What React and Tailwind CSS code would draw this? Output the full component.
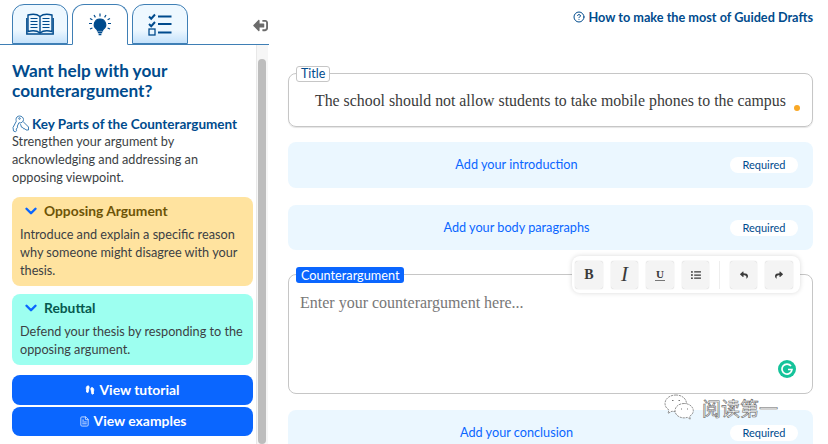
import { ChevronDown, CircleHelp, FileText, Footprints } from "lucide-react";
import { FaSignOutAlt, FaListUl, FaReply, FaShare } from "react-icons/fa";

const sans = "font-['Lato','Noto_Sans',sans-serif]";
const serif = "font-['Liberation_Serif','DejaVu_Serif',serif]";

function BookIcon() {
  return (
    <svg width="28" height="22" viewBox="0 0 28 22" fill="none" stroke="#004b8d" strokeWidth="1.4">
      <path d="M14 3.5C11 1 6 1 2 2V18.5C6 17.5 11 17.5 14 20C17 17.5 22 17.5 26 18.5V2C22 1 17 1 14 3.5Z" />
      <path d="M14 3.5V20M.8 5V21H27.2V5" />
      <path d="M4.5 5.5H11.5M4.5 8.5H11.5M4.5 11.5H11.5M4.5 14.5H11.5M16.5 5.5H23.5M16.5 8.5H23.5M16.5 11.5H23.5M16.5 14.5H23.5" strokeWidth="1.2" />
    </svg>
  );
}

function BulbIcon() {
  return (
    <svg width="24" height="24" viewBox="0 0 24 24" fill="none" stroke="#004b8d" strokeWidth="1.2">
      <path d="M12 6a5.6 5.6 0 0 0-3.3 10.2c.6.5.8 1 .8 1.6h5c0-.6.2-1.1.8-1.6A5.6 5.6 0 0 0 12 6Z" fill="#004b8d" />
      <path d="M9.8 19.6h4.4M10.6 21.4h2.8" strokeWidth="1.5" />
      <path d="M12 .5v3M6 2l1.4 2.4M18 2l-1.4 2.4M1 10.5h3M20 10.5h3M2 16l2.4-1M22 16l-2.4-1M2 5.5l2.4 1.2M22 5.5l-2.4 1.2" />
    </svg>
  );
}

function ChecklistIcon() {
  return (
    <svg width="24" height="23" viewBox="0 0 24 23" fill="none" stroke="#004b8d">
      <path d="M1 3.5l2.2 2.2L7 1.5M1 11l2.2 2.2L7 9" strokeWidth="2" />
      <path d="M10 3.5h13.5M10 11h13.5M10 19.5h13.5" strokeWidth="2" />
      <rect x="1" y="16" width="6" height="6" strokeWidth="1.3" />
    </svg>
  );
}

function KeysIcon() {
  return (
    <svg width="18" height="18" viewBox="0 0 18 18" fill="none" stroke="#3f7fb5" strokeWidth="1">
      <path d="M7.5 1C5.5 1 4 2.5 4 4.5c0 .6.1 1.1.4 1.6L1 12.5l.5 3.5 2 .8 1-1-.3-1.8 1.2-1.2V11l1.5-3.2c2.5.6 4.6-1 4.6-3.3C11.5 2.5 9.5 1 7.5 1Z" />
      <circle cx="7.5" cy="3.5" r="0.8" />
      <path d="M11 6.5l5.5 5.500v3h-2.500l-1-1.200h-1.500l-.6-1.300-1.400-.3-1-3" />
    </svg>
  );
}

function WeChatIcon() {
  return (
    <svg width="31" height="27" viewBox="0 0 31 27" fill="none" stroke="#777" strokeWidth="0.8" strokeDasharray="2.2 0.8">
      <path d="M12 1C6 1 1 4.5 1 9.5c0 3 1.6 5 4 6.5l-1 3.4 4-2.2c1.2.3 2.4.5 4 .5 6 0 10.5-3.5 10.5-8.2S18 1 12 1Z" fill="#fff" />
      <path d="M20 9.5c-5 0-9 3.2-9 7.2s4 7.2 9 7.2c1.2 0 2.2-.2 3.3-.5l3.2 2-1-3c2.3-1.4 3.8-3.4 3.8-5.7 0-4-4-7.2-9-7.2Z" fill="#fff" />
      <path d="M8 6.5h1.5M14.5 6.5H16M17 15h1M23 15h1" strokeWidth="1.2" strokeDasharray="none" />
    </svg>
  );
}

function Tab({ active, children }) {
  return (
    <div
      className={`w-[56px] rounded-t-xl border border-[#3f7fb5] flex items-center justify-center ${
        active
          ? "bg-white border-b-white -mb-px h-[41px]"
          : "h-10 bg-[linear-gradient(#eef8ff_65%,#c5e2fb)]"
      }`}
    >
      {children}
    </div>
  );
}

function NoteBox({ bg, titleColor, title, children }) {
  return (
    <div className={`${bg} rounded-lg pl-[8px] pr-2 pt-[5px] pb-[7px]`}>
      <div className={`flex items-center gap-1 pl-[2px] font-bold text-[13.8px] leading-[18px] ${titleColor}`}>
        <ChevronDown size={18} strokeWidth={3.2} className="text-[#0a66ff]" />
        {title}
      </div>
      <p className="mt-[5px] text-[12.7px] leading-[18px] text-[#3c3f44]">{children}</p>
    </div>
  );
}

function AddSection({ label, height = "h-[46px]" }) {
  return (
    <div className={`${height} shrink-0 bg-[#ebf7ff] rounded-lg flex items-center`}>
      <div className="flex-1 text-center text-[12.7px] text-[#0a66ff] pl-[15px]">{label}</div>
      <div className="w-[68px] h-4 mr-[15px] bg-white rounded-lg text-center text-[11px] leading-4 text-[#004b8d]">
        Required
      </div>
    </div>
  );
}

function ToolButton({ children, className = "" }) {
  return (
    <div className={`${className} h-[28px] bg-[#f4f4f4] rounded-[3px] shadow-[0_0_1px_#bbb] flex items-center justify-center text-[#3a3a3a]`}>
      {children}
    </div>
  );
}

export default function App() {
  return (
    <div className={`${sans} w-[828px] h-[444px] overflow-hidden bg-white flex relative text-[#3c3f44]`}>
      {/* left panel */}
      <div className="w-[269px] shrink-0 pt-[5px] flex flex-col">
        <div className="flex items-end gap-1 pl-3 border-b border-[#3f7fb5] h-10 shrink-0">
          <Tab><BookIcon /></Tab>
          <Tab active><BulbIcon /></Tab>
          <Tab><ChecklistIcon /></Tab>
          <FaSignOutAlt size={15} className="ml-auto mr-px mb-[11px] -scale-x-100 text-[#6b6b6b]" />
        </div>
        <div className="flex flex-1 min-h-0">
          <div className="w-[241px] ml-3 pt-[16px] shrink-0">
            <h2 className="font-bold text-[17.2px] leading-[20px] text-[#004b8d]">
              Want help with your counterargument?
            </h2>
            <div className="mt-[14px] flex items-center gap-[2px] font-bold text-[13.5px] leading-[18px] text-[#004b8d]">
              <KeysIcon />
              Key Parts of the Counterargument
            </div>
            <p className="text-[12.7px] leading-[18px] -mt-px pr-6">
              Strengthen your argument by acknowledging and addressing an opposing viewpoint.
            </p>
            <div className="mt-[11px] flex flex-col gap-2">
              <NoteBox bg="bg-[#ffe39f]" titleColor="text-[#6d5407]" title="Opposing Argument">
                Introduce and explain a specific reason why someone might disagree with your thesis.
              </NoteBox>
              <NoteBox bg="bg-[#9dfff0]" titleColor="text-[#06594f]" title="Rebuttal">
                Defend your thesis by responding to the opposing argument.
              </NoteBox>
            </div>
            <div className="mt-[10px] h-[30px] bg-[#0a66ff] rounded-lg flex items-center justify-center gap-1 text-white font-bold text-[13.9px]">
              <Footprints size={10} strokeWidth={2} fill="currentColor" />
              View tutorial
            </div>
            <div className="mt-[2px] h-[29px] bg-[#0a66ff] rounded-lg flex items-center justify-center gap-1 text-white font-bold text-[13.9px]">
              <FileText size={11} className="text-[#cfe0ff]" />
              View examples
            </div>
          </div>
          <div className="ml-[3px] w-[12px] bg-[#f6f6f6] border-l border-[#e8e8e8] pl-[1px] pt-[14px]">
            <div className="w-[8px] h-full bg-[#bdbdbd] rounded-full" />
          </div>
        </div>
      </div>

      {/* right column */}
      <div className="ml-[19px] w-[525px] shrink-0 flex flex-col">
        <div className="h-[73px] shrink-0 pt-[9px] flex justify-end items-start gap-[3px] text-[12.7px] leading-4 font-bold text-[#004b8d]">
          <CircleHelp size={12} className="mt-[2px]" />
          How to make the most of Guided Drafts
        </div>

        <div className="h-[54px] shrink-0 rounded-lg border border-[#c6c6c6] shadow-[0_1px_1px_#e5e5e5] relative pl-[26px] pt-[17px]">
          <div className="absolute left-[7px] -top-[8px] h-4 px-[4px] bg-white border border-[#c6c6c6] rounded-[3px] text-[12.5px] leading-[14px] text-[#004b8d]">
            Title
          </div>
          <div className={`${serif} text-[15.85px] leading-5 text-[#3a3a3a] whitespace-nowrap`}>
            The school should not allow students to take mobile phones to the campus
          </div>
          <div className="absolute right-[12px] top-[31px] w-[6px] h-[6px] rounded-full bg-[#f9a826]" />
        </div>

        <div className="mt-[15px]"><AddSection label="Add your introduction" /></div>
        <div className="mt-[17px]"><AddSection label="Add your body paragraphs" height="h-[45px]" /></div>

        <div className="mt-6 h-[120px] shrink-0 rounded-lg border border-[#c6c6c6] relative pl-[11px] pt-[18px]">
          <div className="absolute left-[7px] -top-[8px] h-4 px-[5px] bg-[#0a66ff] rounded-[3px] text-[12.7px] leading-4 text-white">
            Counterargument
          </div>
          <div className={`${serif} text-[16px] leading-5 text-[#777]`}>Enter your counterargument here...</div>
          {/* floating toolbar */}
          <div className="absolute left-[283px] -top-[19px] w-[228px] h-[37px] bg-white rounded-lg shadow-[0_0_5px_rgba(0,0,0,0.15)] flex items-center pl-[3px]">
            <ToolButton className="w-[28px]">
              <span className={`${serif} font-bold text-[14px]`}>B</span>
            </ToolButton>
            <ToolButton className="w-[27px] ml-[8px]">
              <span className={`${serif} italic text-[21px]`}>I</span>
            </ToolButton>
            <ToolButton className="w-[28px] ml-[8px]">
              <span className={`${serif} font-bold text-[11px] leading-[11px] border-b border-[#777] px-px`}>U</span>
            </ToolButton>
            <ToolButton className="w-[27px] ml-[8px]"><FaListUl size={10} /></ToolButton>
            <div className="w-px h-[28px] bg-[#eeeeee] ml-[10px]" />
            <ToolButton className="w-[27px] ml-[10px]"><FaReply size={8} /></ToolButton>
            <ToolButton className="w-[28px] ml-[8px]"><FaShare size={8} /></ToolButton>
          </div>
          {/* grammarly badge */}
          <div className="absolute right-[16px] bottom-[15px] w-[18px] h-[18px] rounded-full bg-[#15c39a] flex items-center justify-center">
            <svg width="12" height="12" viewBox="0 0 12 12" fill="none" stroke="#fff" strokeWidth="1.7">
              <path d="M10 3A5 5 0 1 0 11 6.5H7" />
            </svg>
          </div>
        </div>

        <div className="mt-4"><AddSection label="Add your conclusion" /></div>
      </div>

      {/* watermark */}
      <div className="absolute left-[664px] top-[394px] flex items-center gap-[7px] text-white font-['Noto_Sans_CJK_SC',sans-serif] text-[19px] leading-6 [-webkit-text-stroke:0.6px_#666]">
        <WeChatIcon />
        <span>阅读第一</span>
      </div>
    </div>
  );
}
